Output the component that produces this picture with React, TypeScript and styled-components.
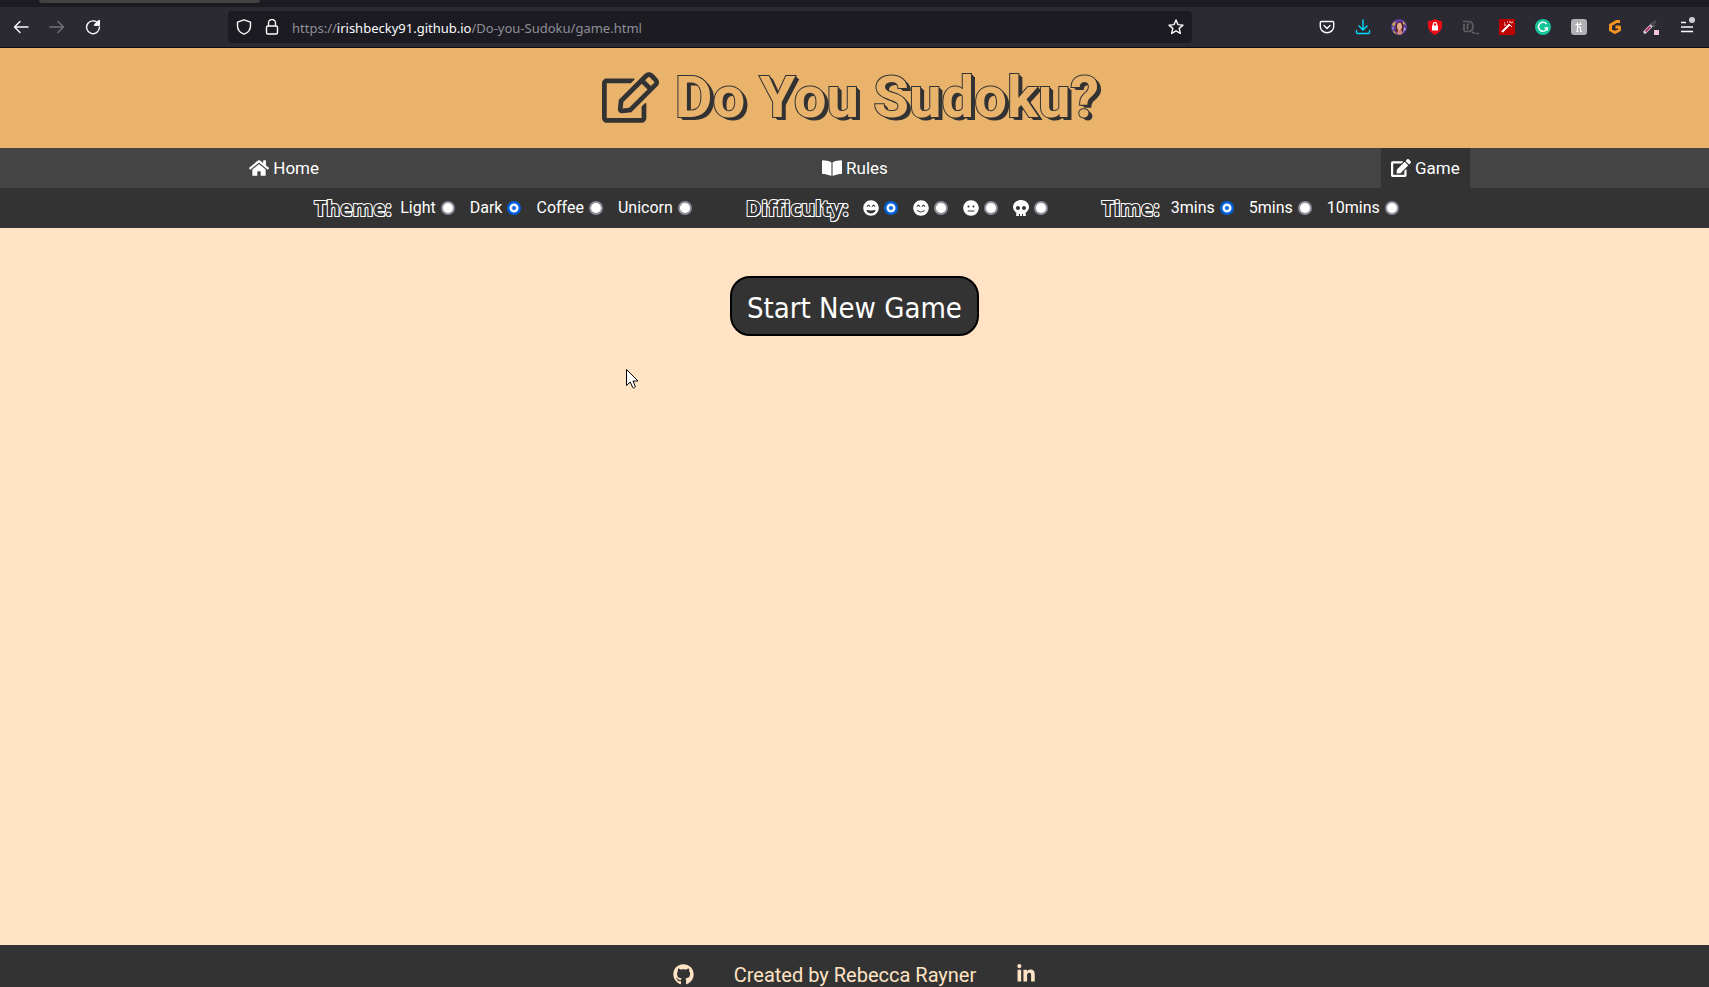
import React from "react";
import styled, { createGlobalStyle, css } from "styled-components";
import { FaHome, FaBookOpen, FaEdit, FaRegEdit, FaGrinBeam, FaSmileBeam, FaMeh, FaSkull, FaGithub, FaLinkedinIn } from "react-icons/fa";

const Global = createGlobalStyle`
  * { box-sizing: border-box; }
  body { margin: 0; background: #ffe3c4; font-family: Roboto, sans-serif; font-size: 16px; }
  button, input { font: inherit; }
`;

const Page = styled.div`
  min-height: 100vh;
  display: flex;
  flex-direction: column;
`;

const TabStrip = styled.div`
  height: 7px;
  padding-left: 39px;
  background: #1c1b22;
`;

const Tab = styled.div`
  width: 221px;
  height: 3px;
  background: #424242;
  border-radius: 0 0 3px 3px;
`;

const Toolbar = styled.div`
  height: 41px;
  display: flex;
  align-items: center;
  background: #2b2a33;
  border-bottom: 1px solid #0c0c0d;
`;

const ToolButton = styled.button`
  width: 36px;
  height: 32px;
  padding: 0;
  border: 0;
  background: none;
  display: flex;
  align-items: center;
  justify-content: center;
  color: #fbfbfe;
  &:disabled { color: #72717c; }
`;

const NavButtons = styled.div`
  width: 228px;
  padding-left: 3px;
  display: flex;
`;

const AddressBar = styled.div`
  flex: 0 1 964px;
  height: 32px;
  padding: 0 8px;
  display: flex;
  align-items: center;
  gap: 12px;
  background: #1c1b22;
  border-radius: 4px;
  color: #fbfbfe;
`;

const Url = styled.div`
  flex: 1;
  padding-top: 2px;
  font: 13px/20px "Noto Sans", sans-serif;
  color: #8f8f98;
  b { font-weight: 400; color: #fbfbfe; }
`;

const Extensions = styled.div`
  margin-left: auto;
  padding-right: 4px;
  display: flex;
`;

const Header = styled.header`
  height: 100px;
  padding: 0 8px 2px 0;
  display: flex;
  align-items: center;
  justify-content: center;
  gap: 16px;
  background: #e9b36c;
  color: #333;
`;

const Title = styled.h1`
  margin: 0;
  font-size: 58px;
  line-height: 68px;
  font-weight: 700;
  color: #e9b36c;
  paint-order: stroke fill;
  -webkit-text-stroke: 2px #333;
  text-shadow: 1px 1px #333, 2px 1px #333, 3px 2px #333, 4px 3px #333;
`;

const Nav = styled.nav`
  height: 40px;
  padding: 0 14%;
  display: flex;
  justify-content: space-between;
  background: #444;
`;

const NavLink = styled.a<{ $active?: boolean }>`
  padding: 0 10px;
  display: flex;
  align-items: center;
  gap: 4px;
  color: #fff;
  font-size: 17px;
  text-decoration: none;
  ${(p) => p.$active && css`background: #333;`}
`;

const Settings = styled.form`
  height: 40px;
  padding-left: 4px;
  display: flex;
  align-items: center;
  justify-content: center;
  gap: 54px;
  background: #333;
  color: #fff;
`;

const Group = styled.div`
  display: flex;
  align-items: center;
  gap: 15px;
`;

const GroupTitle = styled.span<{ $width: number }>`
  width: ${(p) => p.$width}px;
  margin-right: -6px;
  font-family: "Open Sans", sans-serif;
  font-size: 21px;
  line-height: 28px;
  font-weight: 700;
  color: #333;
  paint-order: stroke fill;
  -webkit-text-stroke: 2px #fff;
  text-shadow: 1px 1px #fff;
`;

const Option = styled.label`
  display: flex;
  align-items: center;
  gap: 5px;
  line-height: 20px;
`;

const Radio = styled.input`
  appearance: none;
  width: 14px;
  height: 14px;
  margin: 0;
  border: 2px solid #8f8f9d;
  border-radius: 50%;
  background: #fff;
  &:checked {
    border-color: #0060df;
    background: radial-gradient(circle, #0060df 1px, #fff 3px, #fff 4px, #0060df 5px);
  }
`;

const Main = styled.main`
  position: relative;
  flex: 1;
  padding-top: 48px;
  display: flex;
  justify-content: center;
  align-items: flex-start;
`;

const StartButton = styled.button`
  height: 60px;
  padding: 4px 15px 0;
  border: 2px solid #000;
  border-radius: 20px;
  background: #333;
  color: #fff;
  font: 29px/36px "DejaVu Sans Condensed", "DejaVu Sans", sans-serif;
`;

const Pointer = styled.svg`
  position: absolute;
  left: calc(50% - 229px);
  top: 141px;
`;

const Footer = styled.footer`
  height: 42px;
  padding-top: 18px;
  display: flex;
  align-items: flex-start;
  justify-content: center;
  gap: 40px;
  overflow: hidden;
  background: #333;
  color: #ffe3c4;
  font-size: 20px;
  line-height: 24px;
  a { color: inherit; display: flex; padding-top: 1px; }
`;

const Line = ({ children, color = "currentColor" }: { children: React.ReactNode; color?: string }) => (
  <svg width="16" height="16" viewBox="0 0 16 16" fill="none" stroke={color} strokeWidth="1.4" strokeLinecap="round" strokeLinejoin="round" aria-hidden>
    {children}
  </svg>
);

const extensions: { name: string; icon: React.ReactNode }[] = [
  { name: "Pocket", icon: <Line><path d="M2.5 2.5h11a1.2 1.2 0 0 1 1.2 1.2V7.500a6.700 6.200 0 0 1-13.400 0V3.700a1.200 1.200 0 0 1 1.200-1.200zM5 6.500l3 3 3-3" /></Line> },
  { name: "Downloads", icon: <Line color="#00ddff"><path d="M8 1v9.500M4 7l4 4 4-4M1.500 11.500v2a1 1 0 0 0 1 1h11a1 1 0 0 0 1-1v-2" /></Line> },
  { name: "Profile", icon: (
    <svg width="16" height="16" viewBox="0 0 16 16" aria-hidden>
      <circle cx="8" cy="8" r="8" fill="#5c3f9a" />
      <path d="M1 5l4-3-2 6zM12 2l3 4-3-1zM2 11l4 4-3-1z" fill="#d8b13c" />
      <path d="M13 8l2 2-3 3zM1 8l2 1-1 2z" fill="#b9a9ec" />
      <path d="M5 13c-1-5 0-10 4-10s4 5 3 9l-3 2z" fill="#57231f" />
      <ellipse cx="8.500" cy="7.500" rx="2.500" ry="3.800" fill="#e3ab92" />
      <path d="M6 15l1-4h3l2 3-3 2z" fill="#d5837d" />
    </svg>) },
  { name: "Ad blocker", icon: (
    <svg width="16" height="16" viewBox="0 0 16 16" aria-hidden>
      <path d="M8 0q3 2 7 2v5c0 4-3 7-7 9-4-2-7-5-7-9V2q4 0 7-2z" fill="#ee0d14" />
      <rect x="5" y="6.500" width="6" height="5" rx=".5" fill="#fff" />
      <path d="M6.200 7V5.500a1.800 1.800 0 0 1 3.600 0V7" fill="none" stroke="#fff" strokeWidth="1.200" />
    </svg>) },
  { name: "Dark reader", icon: (
    <svg width="16" height="16" viewBox="0 0 16 16" fill="none" stroke="#606063" strokeWidth="1.700" aria-hidden>
      <path d="M0 2.500h5c3 0 5 2 5 5s-2 5-5 5H1M4.500 5v5.500M1 5v7M4.500 5h1.500M9 13l3 1.500M13 14.500h3" />
    </svg>) },
  { name: "Magic wand", icon: (
    <svg width="16" height="16" viewBox="0 0 16 16" aria-hidden>
      <path d="M0 0h16v16H0z" fill="#c00000" />
      <path d="M3 13l7.500-7.500" stroke="#fff" strokeWidth="2.200" />
      <path d="M10 5l3 3M5 4h1M8 3h1M11 2v2M12 4l2-1M5 6h2" stroke="#fff" />
    </svg>) },
  { name: "Grammar", icon: (
    <svg width="16" height="16" viewBox="0 0 16 16" fill="none" aria-hidden>
      <circle cx="8" cy="8" r="8" fill="#15c39a" />
      <path d="M11.500 5A4.500 4.500 0 1 0 12.300 9H9.500M12.300 9v2.500" stroke="#fff" strokeWidth="1.500" />
    </svg>) },
  { name: "Coupons", icon: (
    <svg width="16" height="16" viewBox="0 0 16 16" aria-hidden>
      <rect width="16" height="16" rx="3" fill="#b1b1b5" />
      <path d="M6.500 3.500v9M6.500 8.500q3-2 3 1v3M4.500 5.500h6M5 12.500h2.500M9 12.500h2M9.500 3.500v2" fill="none" stroke="#fff" strokeWidth="1.200" />
    </svg>) },
  { name: "Security", icon: (
    <svg width="16" height="16" viewBox="0 0 16 16" fill="none" aria-hidden>
      <path d="M13 2.500L9.500 2.500 3.500 6v5L8 13.500l4.500-2.500V8H8.500" stroke="#f7941d" strokeWidth="3" strokeLinejoin="round" />
    </svg>) },
  { name: "Colour picker", icon: (
    <svg width="16" height="16" viewBox="0 0 16 16" aria-hidden>
      <path d="M2 13l7-7" stroke="#d8d4dc" strokeWidth="3.200" strokeLinecap="round" />
      <path d="M2.500 12.500l5-5" stroke="#b52d6c" strokeWidth="1.800" />
      <path d="M8 4l4 4M10 5l3-3" stroke="#4b4a50" strokeWidth="2.500" />
      <rect x="11" y="11" width="5" height="5" fill="#f4c6d6" />
    </svg>) },
  { name: "Menu", icon: (
    <svg width="16" height="20" viewBox="0 0 16 20" fill="none" aria-hidden>
      <path d="M2 5.500h5M2 10h12M2 14.500h12" stroke="#fbfbfe" strokeWidth="1.400" />
      <circle cx="13" cy="3" r="3" fill="#cfcfd8" />
    </svg>) },
];

const groups: { title: string; width: number; name: string; options: { label: string; face: React.ReactNode }[]; selected: number }[] = [
  { title: "Theme:", width: 77, name: "theme", selected: 1, options: ["Light", "Dark", "Coffee", "Unicorn"].map((t) => ({ label: t, face: t })) },
  {
    title: "Difficulty:", width: 108, name: "difficulty", selected: 0,
    options: [
      { label: "Easy", face: <FaGrinBeam size={16} /> },
      { label: "Medium", face: <FaSmileBeam size={16} /> },
      { label: "Hard", face: <FaMeh size={16} /> },
      { label: "Expert", face: <FaSkull size={16} /> },
    ],
  },
  { title: "Time:", width: 60, name: "time", selected: 0, options: ["3mins", "5mins", "10mins"].map((t) => ({ label: t, face: t })) },
];

export default function App() {
  return (
    <Page>
      <Global />
      <TabStrip><Tab /></TabStrip>
      <Toolbar>
        <NavButtons>
          <ToolButton aria-label="Back"><Line><path d="M15 8H1.500M7 2.500L1.500 8 7 13.500" /></Line></ToolButton>
          <ToolButton aria-label="Forward" disabled><Line><path d="M1 8h13.500M9 2.500L14.500 8 9 13.500" /></Line></ToolButton>
          <ToolButton aria-label="Reload"><Line><path d="M13.500 5A6.400 6.400 0 1 0 14.400 8M14 1.500V6H9.500z" /><path d="M14.300 2v4h-4z" fill="currentColor" /></Line></ToolButton>
        </NavButtons>
        <AddressBar>
          <Line><path d="M8 .8l6.500 2.400v3.500c0 4-2.500 7-6.500 8.500C4 13.700 1.500 10.700 1.500 6.700V3.200z" /></Line>
          <Line><rect x="2.500" y="7" width="11" height="8" rx="1.500" /><path d="M4.500 7V4a3.500 3.500 0 0 1 7 0v3" /></Line>
          <Url>https://<b>irishbecky91.github.io</b>/Do-you-Sudoku/game.html</Url>
          <Line><path d="M8 1l2 4.600 5 .5-3.800 3.300 1.200 5L8 11.800l-4.400 2.600 1.200-5L1 6.100l5-.5z" /></Line>
        </AddressBar>
        <Extensions>
          {extensions.map((e) => <ToolButton key={e.name} aria-label={e.name}>{e.icon}</ToolButton>)}
        </Extensions>
      </Toolbar>
      <Header>
        <FaRegEdit size={57} />
        <Title>Do You Sudoku?</Title>
      </Header>
      <Nav>
        <NavLink href="#home"><FaHome size={20} />Home</NavLink>
        <NavLink href="#rules"><FaBookOpen size={20} />Rules</NavLink>
        <NavLink href="#game" $active><FaEdit size={20} />Game</NavLink>
      </Nav>
      <Settings>
        {groups.map((g) => (
          <Group key={g.name} role="radiogroup" aria-label={g.title}>
            <GroupTitle $width={g.width}>{g.title}</GroupTitle>
            {g.options.map((o, i) => (
              <Option key={o.label}>
                {o.face}
                <Radio type="radio" name={g.name} aria-label={o.label} defaultChecked={i === g.selected} />
              </Option>
            ))}
          </Group>
        ))}
      </Settings>
      <Main>
        <StartButton>Start New Game</StartButton>
        <Pointer width="13" height="20" viewBox="0 0 13 20" aria-hidden>
          <path d="M.5.5v16l3.700-3.500 2.500 5.500c.8 1 3 0 2.500-1.200L7 12h5z" fill="#fff" stroke="#000" />
        </Pointer>
      </Main>
      <Footer>
        <a href="#github" aria-label="GitHub"><FaGithub size={21} /></a>
        <span>Created by Rebecca Rayner</span>
        <a href="#linkedin" aria-label="LinkedIn"><FaLinkedinIn size={20} /></a>
      </Footer>
    </Page>
  );
}
